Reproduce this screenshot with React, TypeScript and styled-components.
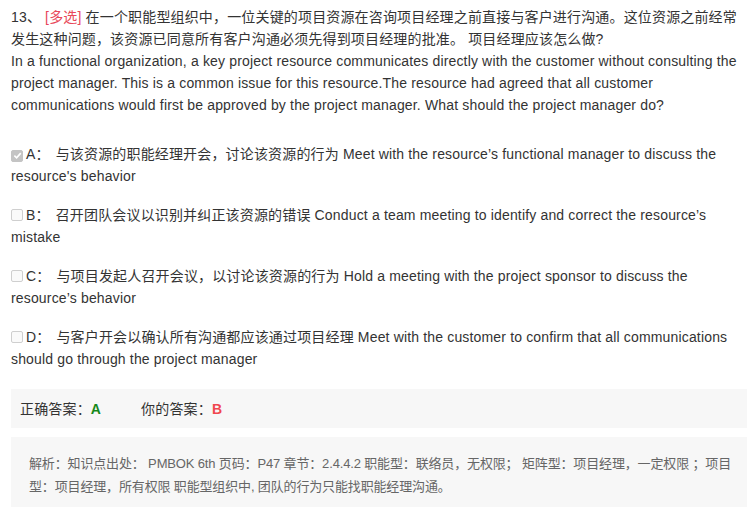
import React from "react";
import styled, { createGlobalStyle } from "styled-components";

const Global = createGlobalStyle`
  html, body { margin: 0; padding: 0; background: #fff; }
  body {
    font-family: "Liberation Sans", Arial, "Noto Sans CJK SC", sans-serif;
    color: #333;
    text-spacing-trim: space-all;
  }
`;

const Page = styled.div`
  width: 747px;
  box-sizing: border-box;
  padding: 6px 0 0 11px;
  font-size: 14px;
  line-height: 22px;
  letter-spacing: 0.16px;
  overflow: hidden;
`;

const Question = styled.div`
  margin: 0 0 27px 0;
`;

const Tag = styled.span`
  color: #e8485a;
`;

const OptionList = styled.div`
  display: flex;
  flex-direction: column;
  gap: 17px;
  margin-right: 6px;
`;

const Option = styled.div`
  line-height: 22px;
`;

const Label = styled.span`
  margin-right: 6px;
`;

const Box = styled.span<{ $checked?: boolean }>`
  display: inline-flex;
  align-items: center;
  justify-content: center;
  box-sizing: border-box;
  width: 12px;
  height: 12px;
  margin-right: 3px;
  vertical-align: -1px;
  border-radius: 2px;
  border: 1px solid ${(p) => (p.$checked ? "#c4c4c4" : "#cfcfcf")};
  background: ${(p) => (p.$checked ? "#c4c4c4" : "#fafafa")};
`;

const AnswerBar = styled.div`
  margin-top: 19px;
  height: 39px;
  display: flex;
  align-items: center;
  padding-left: 9px;
  background: #f7f7f7;
`;

const AnswerItem = styled.span`
  margin-right: 40px;
`;

const Letter = styled.b<{ $color: string }>`
  color: ${(p) => p.$color};
  font-weight: bold;
`;

const Analysis = styled.div`
  margin-top: 9px;
  padding: 15px 14px 20px 18px;
  background: #f7f7f7;
  color: #666;
  font-size: 13px;
  line-height: 23px;
  letter-spacing: -0.15px;
`;

const Check = () => (
  <svg width="9" height="9" viewBox="0 0 10 10">
    <path d="M1.5 5.2 L4 7.6 L8.6 2.4" fill="none" stroke="#fff" strokeWidth="1.8" />
  </svg>
);

const options = [
  {
    key: "A",
    checked: true,
    text: "与该资源的职能经理开会，讨论该资源的行为 Meet with the resource\u2019s functional manager to discuss the resource's behavior",
  },
  {
    key: "B",
    checked: false,
    text: "召开团队会议以识别并纠正该资源的错误 Conduct a team meeting to identify and correct the resource\u2019s mistake",
  },
  {
    key: "C",
    checked: false,
    text: "与项目发起人召开会议，以讨论该资源的行为 Hold a meeting with the project sponsor to discuss the resource\u2019s behavior",
  },
  {
    key: "D",
    checked: false,
    text: "与客户开会以确认所有沟通都应该通过项目经理 Meet with the customer to confirm that all communications should go through the project manager",
  },
];

export default function App() {
  return (
    <Page>
      <Global />
      <Question>
        13、 <Tag>[多选]</Tag> 在一个职能型组织中，一位关键的项目资源在咨询项目经理之前直接与客户进行沟通。这位资源之前经常发生这种问题，该资源已同意所有客户沟通必须先得到项目经理的批准。 项目经理应该怎么做?
        <br />
        In a functional organization, a key project resource communicates directly with the customer without consulting the project manager. This is a common issue for this resource.The resource had agreed that all customer communications would first be approved by the project manager. What should the project manager do?
      </Question>
      <OptionList>
        {options.map((o) => (
          <Option key={o.key}>
            <Box $checked={o.checked}>{o.checked && <Check />}</Box>
            <Label>{o.key}：</Label>
            {o.text}
          </Option>
        ))}
      </OptionList>
      <AnswerBar>
        <AnswerItem>
          正确答案：<Letter $color="#16881a">A</Letter>
        </AnswerItem>
        <AnswerItem>
          你的答案：<Letter $color="#f0474f">B</Letter>
        </AnswerItem>
      </AnswerBar>
      <Analysis>
        解析：知识点出处： PMBOK 6th 页码：P47 章节：2.4.4.2 职能型：联络员，无权限； 矩阵型：项目经理，一定权限 ；项目型：项目经理，所有权限 职能型组织中, 团队的行为只能找职能经理沟通。
      </Analysis>
    </Page>
  );
}
